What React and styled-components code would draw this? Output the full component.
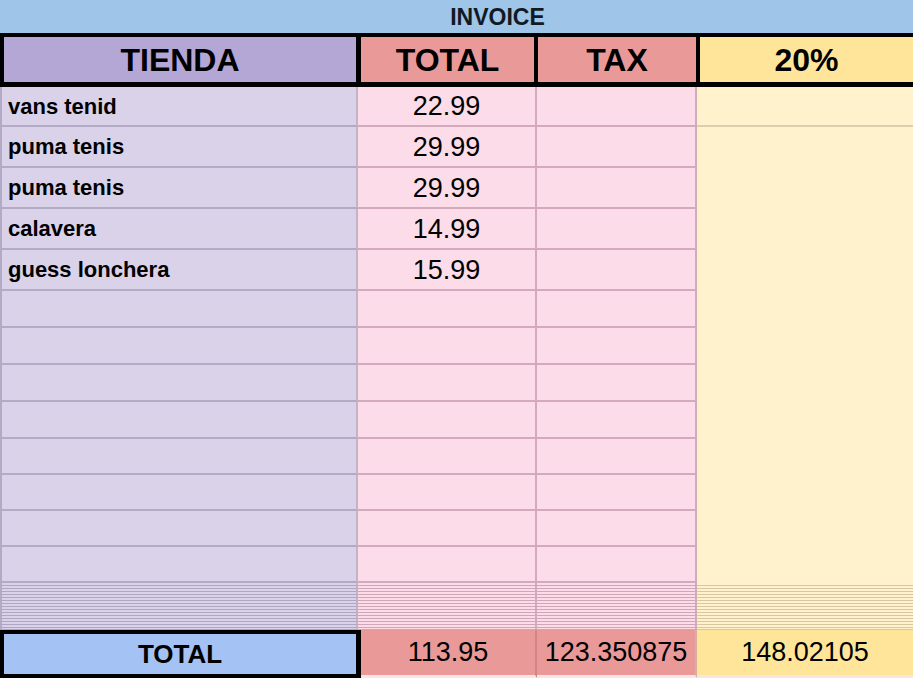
import React from "react";
import styled, { createGlobalStyle } from "styled-components";

const items = [
  { name: "vans tenid", total: "22.99" },
  { name: "puma tenis", total: "29.99" },
  { name: "puma tenis", total: "29.99" },
  { name: "calavera", total: "14.99" },
  { name: "guess lonchera", total: "15.99" },
  { name: "", total: "" },
  { name: "", total: "" },
  { name: "", total: "" },
  { name: "", total: "" },
  { name: "", total: "" },
  { name: "", total: "" },
  { name: "", total: "" },
  { name: "", total: "" },
];

// alto de cada fila (incluye la linea de abajo)
const rowHeights = [40, 41, 41, 41, 41, 37, 37, 37, 37, 36, 36, 36, 36];
// filas ocultas, se ven como rayitas
const stripeHeights = [...Array(15).fill(3), 2];

const tones = {
  lavender: { bg: "#d9d2e9", line: "#b3abc6", side: "#c4b2c6", stripe: "#aea6c2" },
  pink: { bg: "#fbdce8", line: "#d2aabb", side: "#d2aabb", stripe: "#cea6b6" },
  cream: { bg: "#fff2cc", line: "#dccfb0", side: "#dccfb0", stripe: "#d6c6a2" },
};

function App() {
  const bodyRows = [...rowHeights, ...stripeHeights].map((h) => `${h}px`).join(" ");

  return (
    <>
      <GlobalStyle />
      <Sheet>
        <Title>INVOICE</Title>

        <HeaderRow>
          <HeadCell $bg="#b4a7d6" $first>TIENDA</HeadCell>
          <HeadCell $bg="#ea9999">TOTAL</HeadCell>
          <HeadCell $bg="#ea9999">TAX</HeadCell>
          <HeadCell $bg="#ffe599" $last>20%</HeadCell>
        </HeaderRow>

        <Body $rows={bodyRows}>
          {items.map((item, i) => (
            <React.Fragment key={i}>
              <Cell $tone="lavender" $first>
                <ItemName>{item.name}</ItemName>
              </Cell>
              <Cell $tone="pink">
                <Amount>{item.total}</Amount>
              </Cell>
              <Cell $tone="pink" />
              {i === 0 && <Cell $tone="cream" $last />}
              {i === 1 && <MergedCell />}
            </React.Fragment>
          ))}
          {stripeHeights.map((_, i) => (
            <React.Fragment key={`s${i}`}>
              <StripeCell $tone="lavender" $first />
              <StripeCell $tone="pink" />
              <StripeCell $tone="pink" />
              <StripeCell $tone="cream" $last />
            </React.Fragment>
          ))}
        </Body>

        <TotalRow>
          <TotalLabel>TOTAL</TotalLabel>
          <TotalCell $bg="#ea9999" $line="#cf8585">113.95</TotalCell>
          <TotalCell $bg="#ea9999" $line="#d6b0a0">123.350875</TotalCell>
          <TotalCell $bg="#ffe599" $last>148.02105</TotalCell>
        </TotalRow>
      </Sheet>
    </>
  );
}

export default App;

// estilos
const GlobalStyle = createGlobalStyle`
  * { box-sizing: border-box; }
  body {
    margin: 0;
    background: #ffffff;
    font-family: "Liberation Sans", Arial, sans-serif;
    color: #000;
  }
`;

const Sheet = styled.div`
  width: 913px;
  height: 678px;
  overflow: hidden;
  display: flex;
  flex-direction: column;
`;

const Title = styled.div`
  height: 33px;
  flex-shrink: 0;
  background: #9fc5e8;
  display: flex;
  align-items: center;
  justify-content: center;
  padding-left: 82px;
  padding-top: 2px;
  font-size: 23px;
  font-weight: 700;
  color: #111a24;
`;

const HeaderRow = styled.div`
  display: grid;
  grid-template-columns: 361px 177px 162px 213px;
  height: 54px;
  flex-shrink: 0;
  border-top: 4px solid #000;
  border-bottom: 5px solid #000;
`;

const HeadCell = styled.div`
  background: ${(p) => p.$bg};
  display: flex;
  align-items: center;
  justify-content: center;
  padding-top: 2px;
  font-size: 32px;
  font-weight: 700;
  border-left: ${(p) => (p.$first ? "4px solid #000" : "none")};
  border-right: ${(p) => (p.$last ? "none" : p.$first ? "5px solid #000" : "4px solid #000")};
`;

const Body = styled.div`
  display: grid;
  grid-template-columns: 358px 179px 160px 216px;
  grid-template-rows: ${(p) => p.$rows};
  flex-shrink: 0;
`;

const Cell = styled.div`
  background: ${(p) => tones[p.$tone].bg};
  border-bottom: 2px solid ${(p) => tones[p.$tone].line};
  border-right: ${(p) => (p.$last ? "none" : `2px solid ${tones[p.$tone].side}`)};
  border-left: ${(p) => (p.$first ? `2px solid ${tones[p.$tone].line}` : "none")};
  display: flex;
  align-items: center;
  justify-content: ${(p) => (p.$first ? "flex-start" : "center")};
  padding-left: ${(p) => (p.$first ? "6px" : "0")};
  padding-top: 1px;
  overflow: hidden;
`;

const MergedCell = styled.div`
  grid-column: 4;
  grid-row: 2 / span 12;
  background: ${tones.cream.bg};
`;

const StripeCell = styled.div`
  background: ${(p) => tones[p.$tone].bg};
  border-bottom: 1px solid ${(p) => tones[p.$tone].stripe};
  border-right: ${(p) => (p.$last ? "none" : `2px solid ${tones[p.$tone].side}`)};
  border-left: ${(p) => (p.$first ? `2px solid ${tones[p.$tone].line}` : "none")};
`;

const ItemName = styled.span`
  font-size: 22px;
  font-weight: 700;
  white-space: nowrap;
`;

const Amount = styled.span`
  font-size: 27px;
  font-weight: 400;
`;

const TotalRow = styled.div`
  display: grid;
  grid-template-columns: 361px 176px 160px 216px;
  flex: 1;
`;

const TotalLabel = styled.div`
  background: #a4c2f4;
  border: 4px solid #000;
  border-right-width: 5px;
  display: flex;
  align-items: center;
  justify-content: center;
  font-size: 26px;
  font-weight: 700;
`;

const TotalCell = styled.div`
  background: ${(p) => p.$bg};
  border-right: ${(p) => (p.$last ? "none" : `2px solid ${p.$line}`)};
  border-bottom: 3px solid #f6e6e6;
  display: flex;
  align-items: center;
  justify-content: center;
  font-size: 27px;
  font-weight: 400;
`;
